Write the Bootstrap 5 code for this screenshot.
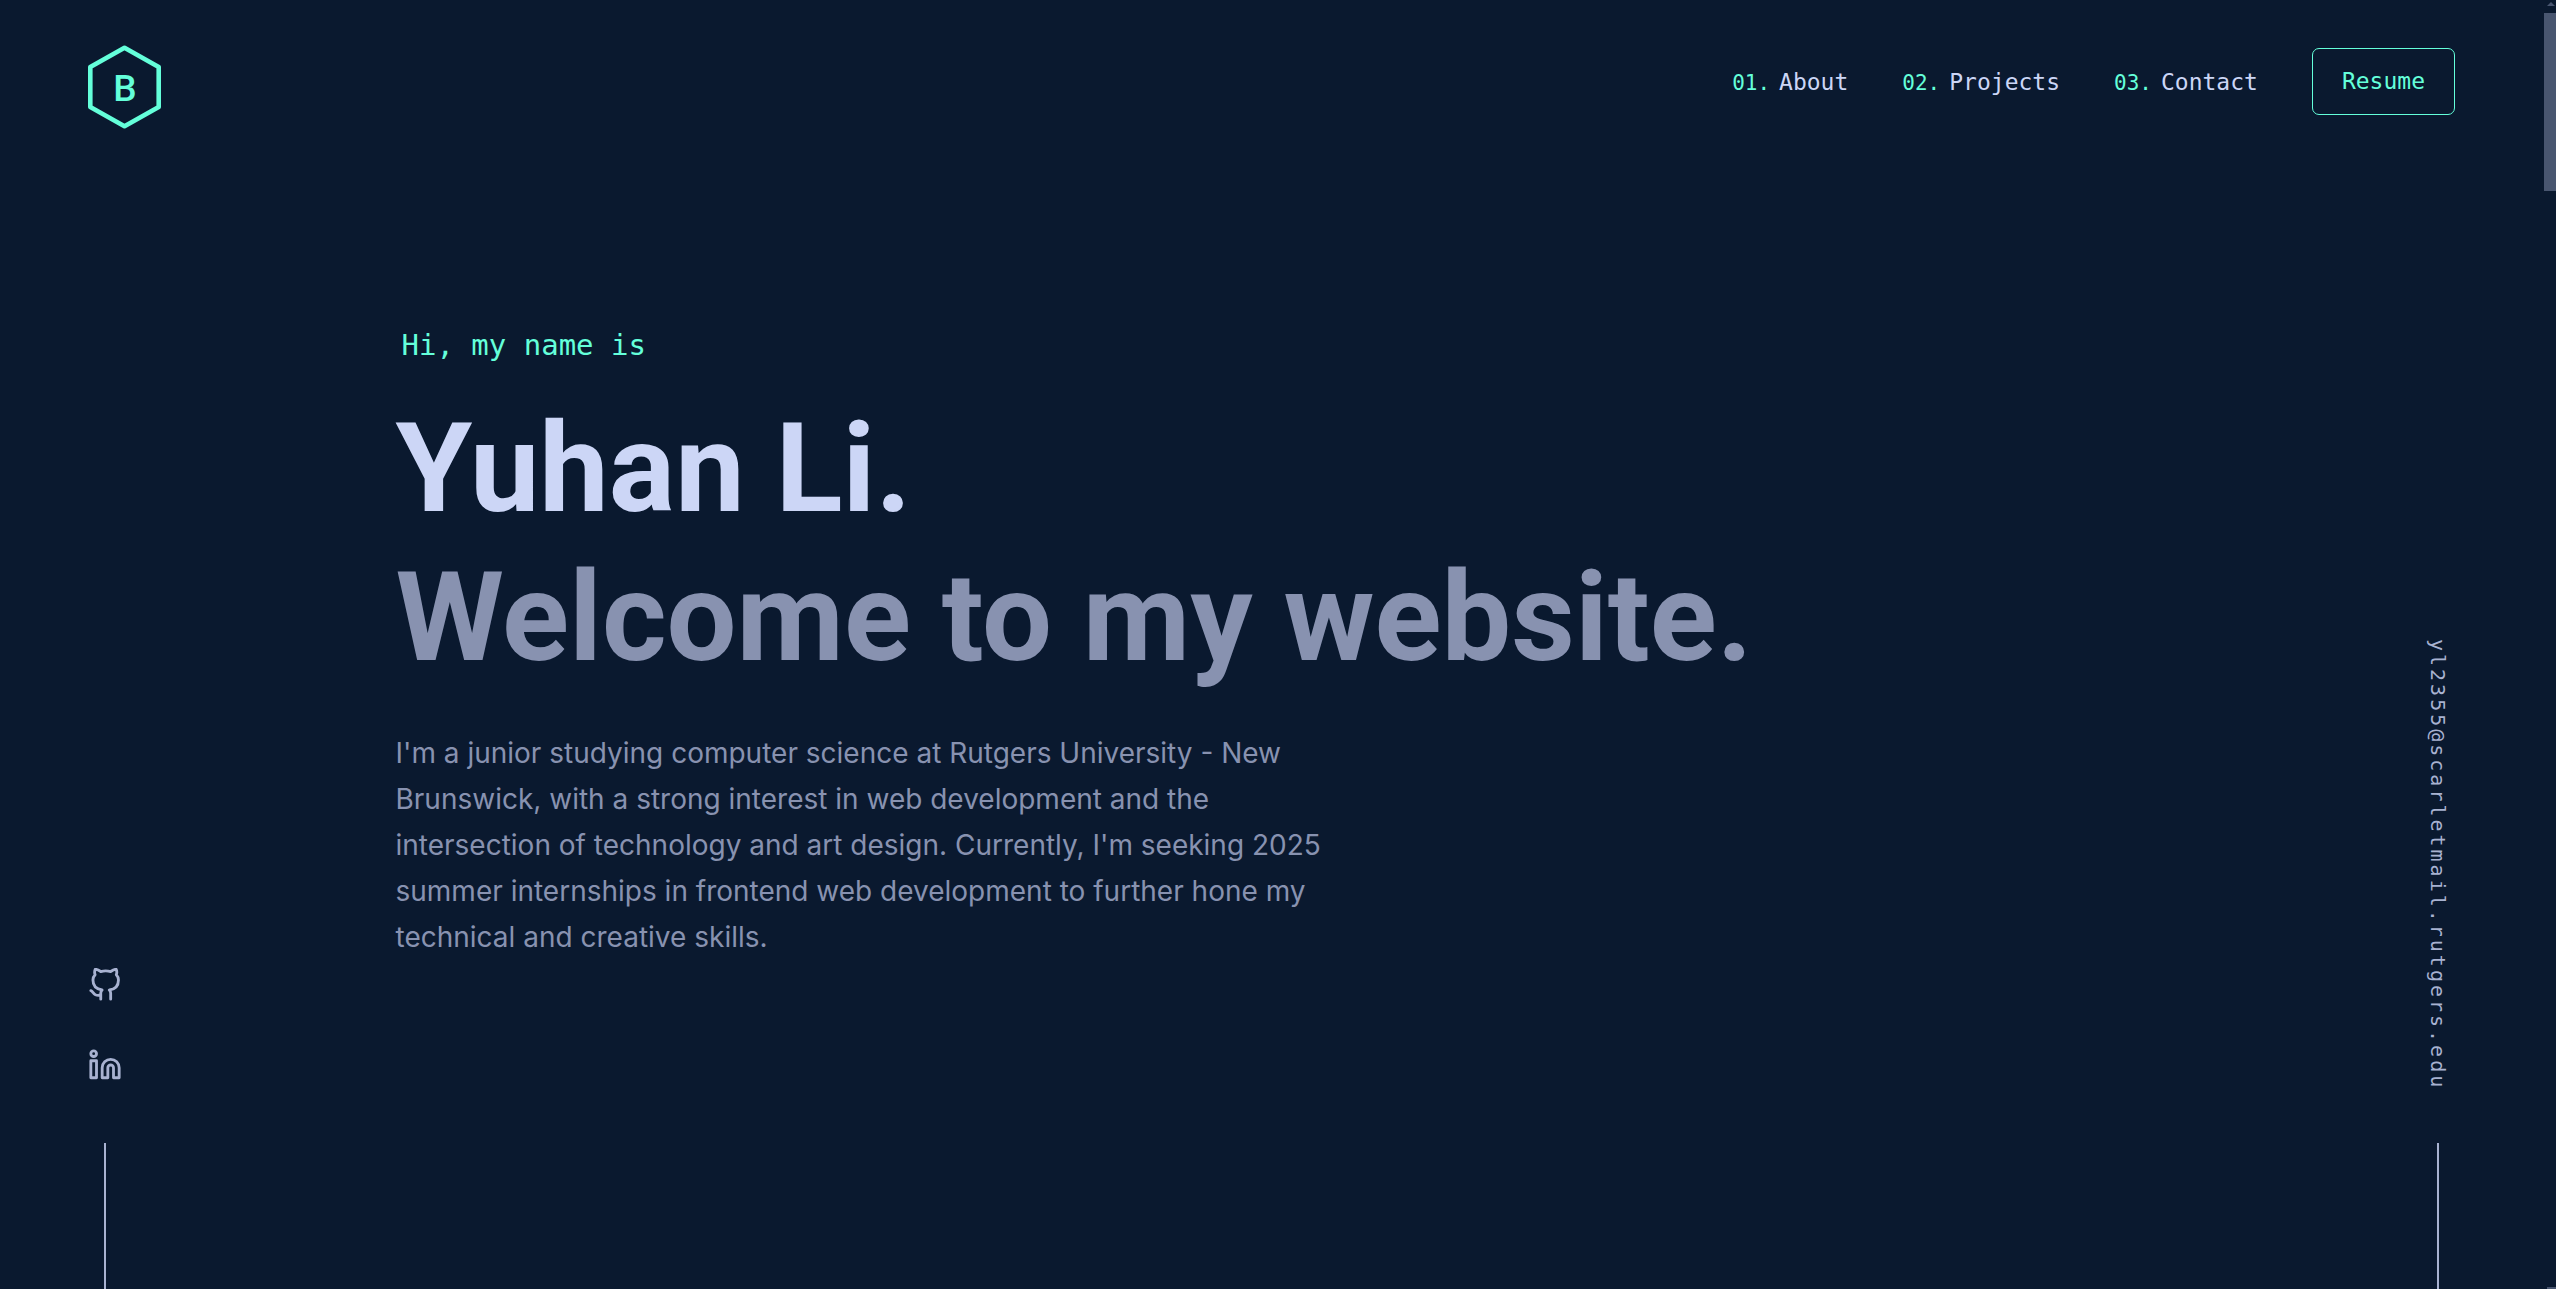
<!DOCTYPE html>
<html lang="en">
<head>
<meta charset="utf-8">
<meta name="viewport" content="width=device-width, initial-scale=1">
<title>Yuhan Li</title>
<link href="https://cdn.jsdelivr.net/npm/bootstrap@5.3.0/dist/css/bootstrap.min.css" rel="stylesheet">
<style>
:root {
  --navy: #0a192f;
  --green: #64ffda;
  --lightest: #ccd6f6;
  --light: #a8b2d1;
  --slate: #8892b0;
  --thumb: #495670;
  --mono: "DejaVu Sans Mono", "Liberation Mono", monospace;
}
body {
  background: var(--navy);
  color: var(--slate);
  font-family: Inter, Roboto, sans-serif;
}
a { text-decoration: none; }
.page { padding-right: 13px; }
.site-header { padding: 45px 88px 0; }
.logo svg { width: 73px; height: 84px; }
.logo text { font: 500 37px Roboto, sans-serif; fill: var(--green); }
.menu { gap: 54px; margin-top: 3px; font-family: var(--mono); font-size: 23px; }
.menu ol { gap: 54px; padding-top: 2px; }
.menu li a { gap: 9px; color: var(--lightest); }
.menu .num { color: var(--green); font-size: 21px; }
.btn-resume {
  --bs-btn-color: var(--green);
  --bs-btn-border-color: var(--green);
  --bs-btn-hover-color: var(--green);
  --bs-btn-hover-border-color: var(--green);
  --bs-btn-hover-bg: rgba(100, 255, 218, .1);
  --bs-btn-font-size: 23px;
  --bs-btn-padding-x: 29px;
  --bs-btn-padding-y: 15px;
  --bs-btn-border-radius: 7px;
  --bs-btn-line-height: 35px;
}
.stage { padding: 0 88px; }
.rail { width: 34px; }
.rail::after { content: ""; width: 2px; height: 146px; background: var(--light); }
.rail a { color: var(--light); }
.socials { gap: 46px; margin-bottom: 61px; }
.socials svg { width: 34px; height: 34px; }
.mail {
  writing-mode: vertical-rl;
  font: 20px/34px var(--mono);
  letter-spacing: 3px;
  margin-bottom: 53px;
}
.hero { max-width: 1752px; padding-top: 198px; }
.hello { color: var(--green); font: 29px/36px var(--mono); margin: 0 0 38px 6px; }
.headline { font: 700 124px/136px Roboto, sans-serif; margin: 0 0 13px; }
.person { color: var(--lightest); }
.about { max-width: 960px; margin-top: 44px; font-size: 28px; line-height: 46px; }
.scroller { top: 0; right: 0; width: 12px; height: 100vh; }
.scroller i { width: 8px; height: 4px; margin: 2px 1px 0 auto; background: var(--thumb); clip-path: polygon(50% 0, 100% 100%, 0 100%); }
.scroller b { height: 178px; margin-top: 7px; background: var(--thumb); }
.scroller u { width: 9px; height: 2px; margin: auto 0 0 auto; background: var(--thumb); }
</style>
</head>
<body>
<div class="page d-flex flex-column min-vh-100">
  <header class="site-header d-flex justify-content-between align-items-start">
    <a class="logo d-flex" href="#" aria-label="Home">
      <svg viewBox="0 0 73 84" fill="none">
        <path d="M36.5 2.7 70.7 22v40L36.5 81.3 2.3 62V22Z" stroke="#64ffda" stroke-width="4.6" stroke-linejoin="round"/>
        <text x="37" y="56" text-anchor="middle">B</text>
      </svg>
    </a>
    <nav class="menu d-flex align-items-center">
      <ol class="list-unstyled d-flex mb-0">
        <li><a class="d-flex align-items-baseline" href="#about"><span class="num">01.</span>About</a></li>
        <li><a class="d-flex align-items-baseline" href="#projects"><span class="num">02.</span>Projects</a></li>
        <li><a class="d-flex align-items-baseline" href="#contact"><span class="num">03.</span>Contact</a></li>
      </ol>
      <button type="button" class="btn btn-resume">Resume</button>
    </nav>
  </header>

  <div class="stage d-flex flex-grow-1 justify-content-between">
    <aside class="rail d-flex flex-column justify-content-end align-items-center">
      <div class="socials d-flex flex-column">
        <a class="d-flex" href="#" aria-label="GitHub">
          <svg viewBox="0 0 24 24" fill="none" stroke="currentColor" stroke-width="2" stroke-linecap="round" stroke-linejoin="round"><path d="M9 19c-5 1.5-5-2.5-7-3m14 6v-3.87a3.37 3.37 0 0 0-.94-2.61c3.14-.35 6.44-1.54 6.44-7A5.44 5.44 0 0 0 20 4.77 5.07 5.07 0 0 0 19.91 1S18.73.65 16 2.48a13.38 13.38 0 0 0-7 0C6.27.65 5.09 1 5.09 1A5.07 5.07 0 0 0 5 4.77a5.44 5.44 0 0 0-1.5 3.78c0 5.42 3.3 6.61 6.44 7A3.37 3.37 0 0 0 9 18.13V22"/></svg>
        </a>
        <a class="d-flex" href="#" aria-label="LinkedIn">
          <svg viewBox="0 0 24 24" fill="none" stroke="currentColor" stroke-width="2" stroke-linecap="round" stroke-linejoin="round"><path d="M16 8a6 6 0 0 1 6 6v7h-4v-7a2 2 0 0 0-4 0v7h-4v-7a6 6 0 0 1 6-6z"/><path d="M2 9h4v12H2z"/><circle cx="4" cy="4" r="2"/></svg>
        </a>
      </div>
    </aside>

    <main class="hero flex-grow-1">
      <p class="hello">Hi, my name is</p>
      <h1 class="headline person">Yuhan Li.</h1>
      <h2 class="headline">Welcome to my website.</h2>
      <p class="about mb-0">I'm a junior studying computer science at Rutgers University - New Brunswick, with a strong interest in web development and the intersection of technology and art design. Currently, I'm seeking 2025 summer internships in frontend web development to further hone my technical and creative skills.</p>
    </main>

    <aside class="rail d-flex flex-column justify-content-end align-items-center">
      <a class="mail" href="mailto:yl2355@scarletmail.rutgers.edu">yl2355@scarletmail.rutgers.edu</a>
    </aside>
  </div>
</div>

<div class="scroller position-fixed d-flex flex-column" aria-hidden="true"><i></i><b></b><u></u></div>
<script src="https://cdn.jsdelivr.net/npm/bootstrap@5.3.0/dist/js/bootstrap.bundle.min.js"></script>
</body>
</html>
